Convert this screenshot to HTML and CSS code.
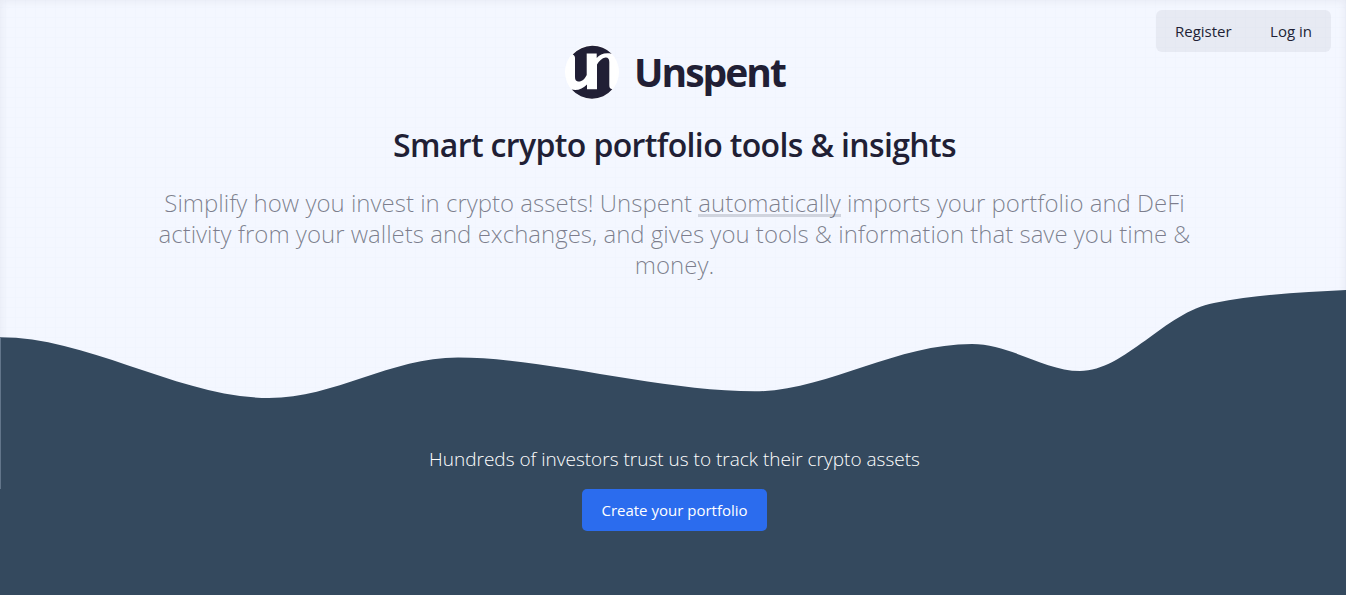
FILE: index.html
```html
<!DOCTYPE html>
<html lang="en">

<head>
    <meta charset="UTF-8">
    <meta name="viewport" content="width=device-width, initial-scale=1.0">
    <title>Unspent</title>
    <link rel="stylesheet" href="styles.css">
</head>

<body>
    <div class="hero">
        <nav class="nav">
            <a href="#">Register</a>
            <a href="#">Log in</a>
        </nav>
        <header class="intro">
            <div class="brand">
                <svg class="logo" viewBox="0 0 56 56">
                    <circle cx="28" cy="28" r="27" fill="#fff" />
                    <path fill="#211f35" d="M8.7 10.5A27 27 0 0 1 47.7 9.8C41 8.5 36 10 32.7 14V9.6H22.7V31C21 35 17.5 38 14 37.5C12 37 11 36 11 33V14C11 12 10 11 8.7 10.5Z" />
                    <path fill="#211f35" d="M7.7 45.6A27 27 0 0 0 48.3 45.3C46 45 45.3 43.5 45.3 41V18C45.3 15 44 13.3 41.5 13.5C38 14 35 17 33 20.5V45.3H23V40.5C19 45 13 47 7.7 45.6Z" />
                </svg>
                <h1>Unspent</h1>
            </div>
            <h2>Smart crypto portfolio tools &amp; insights</h2>
            <p>Simplify how you invest in crypto assets! Unspent <span class="mark">automatically</span> imports your portfolio and DeFi activity from your wallets and exchanges, and gives you tools &amp; information that save you time &amp; money.</p>
        </header>
        <svg class="wave" viewBox="0 0 1346 199" preserveAspectRatio="none">
            <path d="M0 47.3C90 47.3 180 108 269 108C335 108 390 67.5 458 67.5C545 67.5 660 101.3 755 101.3C825 101.3 895 54 972 54C1010 54 1045 81 1080 81C1125 81 1165 22 1214 13C1260 4 1305 2 1346 0V199H0Z" />
            <rect class="edge" x="0" y="48" width="1" height="151" />
        </svg>
    </div>
    <section class="signup">
        <p>Hundreds of investors trust us to track their crypto assets</p>
        <a class="btn" href="#">Create your portfolio</a>
    </section>
</body>

</html>
```
FILE: styles.css
```css
* {
    margin: 0;
    padding: 0;
    box-sizing: border-box;
}

body {
    height: 595px;
    overflow: hidden;
    font-family: "Open Sans", sans-serif;
    color: #211f35;
    background-color: #34495e;
}

a {
    color: inherit;
    text-decoration: none;
}

.hero {
    position: relative;
    height: 489px;
    display: flex;
    flex-direction: column;
    background-color: #f4f7ff;
    background-image: linear-gradient(#f1f5fe 1px, transparent 1px), linear-gradient(90deg, #f1f5fe 1px, transparent 1px);
    background-size: 10px 10px;
    background-position: 5px 7px;
    box-shadow: inset 0 0 10px rgba(33, 31, 53, 0.07);
}

/* floats over the top right corner */
.nav {
    position: absolute;
    top: 10px;
    right: 15px;
    width: 175px;
    height: 42px;
    padding: 0 19px;
    display: flex;
    justify-content: space-between;
    align-items: center;
    font-size: 15px;
    border-radius: 6px;
    background-color: rgba(33, 41, 53, 0.06);
}

.intro {
    height: 290px;
    padding: 44px 0 0 3px;
    text-align: center;
}

.brand {
    height: 56px;
    display: flex;
    justify-content: center;
    align-items: center;
    gap: 14px;
}

.logo {
    width: 56px;
    height: 56px;
}

h1 {
    font-size: 39px;
    line-height: 56px;
    font-weight: 700;
    letter-spacing: -2px;
}

h2 {
    margin-top: 21px;
    font-size: 32px;
    line-height: 48px;
    font-weight: 600;
    letter-spacing: -0.64px;
}

.intro p {
    width: 1060px;
    margin: 18px auto 0;
    font-size: 24px;
    line-height: 31px;
    font-weight: 300;
    color: #211f3590;
}

.mark {
    background: linear-gradient(#d0d4de, #d0d4de) left bottom 2px / 100% 3px no-repeat;
}

.wave {
    display: block;
    width: 100%;
    height: 199px;
    fill: #34495e;
}

.wave .edge {
    fill: #62758a;
}

.signup {
    height: 106px;
    margin-top: -43px;
    padding-left: 3px;
    position: relative;
    display: flex;
    flex-direction: column;
    align-items: center;
    color: #fff;
}

.signup p {
    font-size: 19px;
    line-height: 26px;
    font-weight: 300;
}

.btn {
    margin-top: 17px;
    height: 42px;
    padding: 0 19px;
    font-size: 15px;
    line-height: 42px;
    border-radius: 5px;
    background-color: #2b6cee;
}
```
